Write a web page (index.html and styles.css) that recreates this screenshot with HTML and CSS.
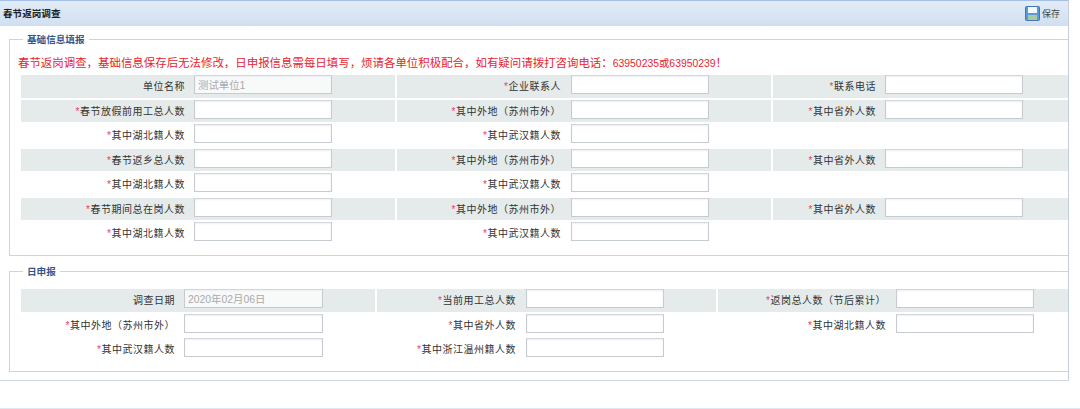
FILE: index.html
```html
<!DOCTYPE html>
<html lang="zh-CN">
<head>
<meta charset="utf-8">
<title>春节返岗调查</title>
<link rel="stylesheet" href="styles.css">
</head>
<body>
<div class="panel">
  <div class="panel-head">
    <span class="panel-title">春节返岗调查</span>
    <span class="save">
      <svg class="save-icon" width="15" height="15" viewBox="0 0 15 15">
        <rect x="0.5" y="0.5" width="14" height="14" rx="1" fill="#5a9ad8" stroke="#3f78b4"/>
        <rect x="3" y="1" width="9" height="6" fill="#f4f8fb"/>
        <rect x="3" y="9" width="9" height="5" fill="#a9c9a0"/>
      </svg>保存
    </span>
  </div>

  <fieldset class="group group-base">
    <legend>基础信息填报</legend>
    <p class="notice">春节返岗调查，基础信息保存后无法修改，日申报信息需每日填写，烦请各单位积极配合，如有疑问请拨打咨询电话：<span class="phone">63950235或63950239</span>！</p>
    <div class="form form-a">
      <div class="row shaded">
        <div class="cell"><label>单位名称</label><input class="locked" value="测试单位1" disabled></div>
        <div class="cell"><label><i>*</i>企业联系人</label><input></div>
        <div class="cell"><label><i>*</i>联系电话</label><input></div>
      </div>
      <div class="row shaded">
        <div class="cell"><label><i>*</i>春节放假前用工总人数</label><input></div>
        <div class="cell"><label><i>*</i>其中外地（苏州市外）</label><input></div>
        <div class="cell"><label><i>*</i>其中省外人数</label><input></div>
      </div>
      <div class="row">
        <div class="cell"><label><i>*</i>其中湖北籍人数</label><input></div>
        <div class="cell"><label><i>*</i>其中武汉籍人数</label><input></div>
        <div class="cell"></div>
      </div>
      <div class="row shaded">
        <div class="cell"><label><i>*</i>春节返乡总人数</label><input></div>
        <div class="cell"><label><i>*</i>其中外地（苏州市外）</label><input></div>
        <div class="cell"><label><i>*</i>其中省外人数</label><input></div>
      </div>
      <div class="row">
        <div class="cell"><label><i>*</i>其中湖北籍人数</label><input></div>
        <div class="cell"><label><i>*</i>其中武汉籍人数</label><input></div>
        <div class="cell"></div>
      </div>
      <div class="row shaded">
        <div class="cell"><label><i>*</i>春节期间总在岗人数</label><input></div>
        <div class="cell"><label><i>*</i>其中外地（苏州市外）</label><input></div>
        <div class="cell"><label><i>*</i>其中省外人数</label><input></div>
      </div>
      <div class="row">
        <div class="cell"><label><i>*</i>其中湖北籍人数</label><input></div>
        <div class="cell"><label><i>*</i>其中武汉籍人数</label><input></div>
        <div class="cell"></div>
      </div>
    </div>
  </fieldset>

  <fieldset class="group group-daily">
    <legend>日申报</legend>
    <div class="form form-b">
      <div class="row shaded">
        <div class="cell"><label>调查日期</label><input class="locked" value="2020年02月06日" disabled></div>
        <div class="cell"><label><i>*</i>当前用工总人数</label><input></div>
        <div class="cell"><label><i>*</i>返岗总人数（节后累计）</label><input></div>
      </div>
      <div class="row">
        <div class="cell"><label><i>*</i>其中外地（苏州市外）</label><input></div>
        <div class="cell"><label><i>*</i>其中省外人数</label><input></div>
        <div class="cell"><label><i>*</i>其中湖北籍人数</label><input></div>
      </div>
      <div class="row">
        <div class="cell"><label><i>*</i>其中武汉籍人数</label><input></div>
        <div class="cell"><label><i>*</i>其中浙江温州籍人数</label><input></div>
        <div class="cell"></div>
      </div>
    </div>
  </fieldset>
</div>
<div class="page-foot"></div>
</body>
</html>
```
FILE: styles.css
```css
* { box-sizing: border-box; }

html, body {
  margin: 0;
  height: 409px;
  overflow: hidden;
  background: #fff;
}

body {
  font-family: "Liberation Sans", "Noto Sans CJK SC", sans-serif;
  font-size: 10px;
  color: #333;
}

.panel {
  width: 1069px;
  height: 381px;
  border-right: 1px solid #c3cfe0;
  border-bottom: 1px solid #cdd6e2;
  overflow: hidden;
}

.panel-head {
  height: 26px;
  border-top: 1px solid #a3bfe8;
  background: linear-gradient(#e3ecf7, #d0dff0);
  display: flex;
  align-items: center;
  justify-content: space-between;
  padding: 0 8px 1px 3px;
}

.panel-title {
  font-size: 9.6px;
  font-weight: 700;
  color: #222;
}

.save {
  display: flex;
  align-items: center;
  gap: 2px;
  font-size: 9px;
  color: #444;
}

.save-icon { display: block; }

.group {
  margin: 7px 0 0 9px;
  padding: 0 0 0 11px;
  border: 0;
  border-top: 1px solid #cfd3dc;
  border-left: 1px solid #cfd3dc;
  border-bottom: 1px solid #cfd3dc;
  min-width: 0;
}

.group legend {
  margin-left: 2px;
  padding: 1px 4px 0;
  font-size: 9.6px;
  line-height: 12px;
  font-weight: 700;
  color: #34558c;
}

.group-base { height: 223px; }

.group-daily {
  margin-top: 9px;
  height: 107px;
}

.notice {
  margin: 8px 0 3px -3px;
  height: 18px;
  line-height: 18px;
  font-size: 11.44px;
  color: #e8232e;
  white-space: nowrap;
}

.phone { font-size: 10.4px; }

.form {
  display: flex;
  flex-direction: column;
  gap: 2px;
}

.form-b { margin-top: 11px; }

.row {
  display: grid;
  column-gap: 2px;
  height: 22.5px;
}

.form-a .row { grid-template-columns: 374px 374px 295px; }
.form-b .row { grid-template-columns: 354px 339px 350px; }

.shaded .cell { background: #e5ebeb; }

.cell {
  display: flex;
  align-items: flex-start;
}

.cell label {
  flex: none;
  height: 22.5px;
  line-height: 22.5px;
  padding-top: 1px;
  text-align: right;
  padding-right: 9px;
  letter-spacing: 0.5px;
  white-space: nowrap;
}

.cell label i {
  font-style: normal;
  color: #e8405c;
}

.form-a .cell:nth-child(1) label { width: 173px; }
.form-a .cell:nth-child(2) label { width: 174px; padding-right: 10px; }
.form-a .cell:nth-child(3) label { width: 112px; }
.form-b .cell:nth-child(1) label { width: 163px; }
.form-b .cell:nth-child(2) label { width: 149px; padding-right: 10px; }
.form-b .cell:nth-child(3) label { width: 178px; padding-right: 10px; }

.cell input {
  flex: none;
  width: 138px;
  height: 19px;
  padding: 0 3px;
  border: 1px solid #c6cbd2;
  border-top-color: #d2d6dc;
  border-radius: 0;
  background: #fff;
  box-shadow: inset 0 1px 2px #eef0f3;
  font: 10.4px "Liberation Sans", "Noto Sans CJK SC", sans-serif;
  outline: 0;
}

.form-b .cell:nth-child(1) input { width: 139px; }

.cell input.locked {
  background: #f8f9f9;
  color: #aaa;
}

.page-foot {
  height: 1px;
  margin-top: 27px;
  background: #dfe7f1;
}
```
